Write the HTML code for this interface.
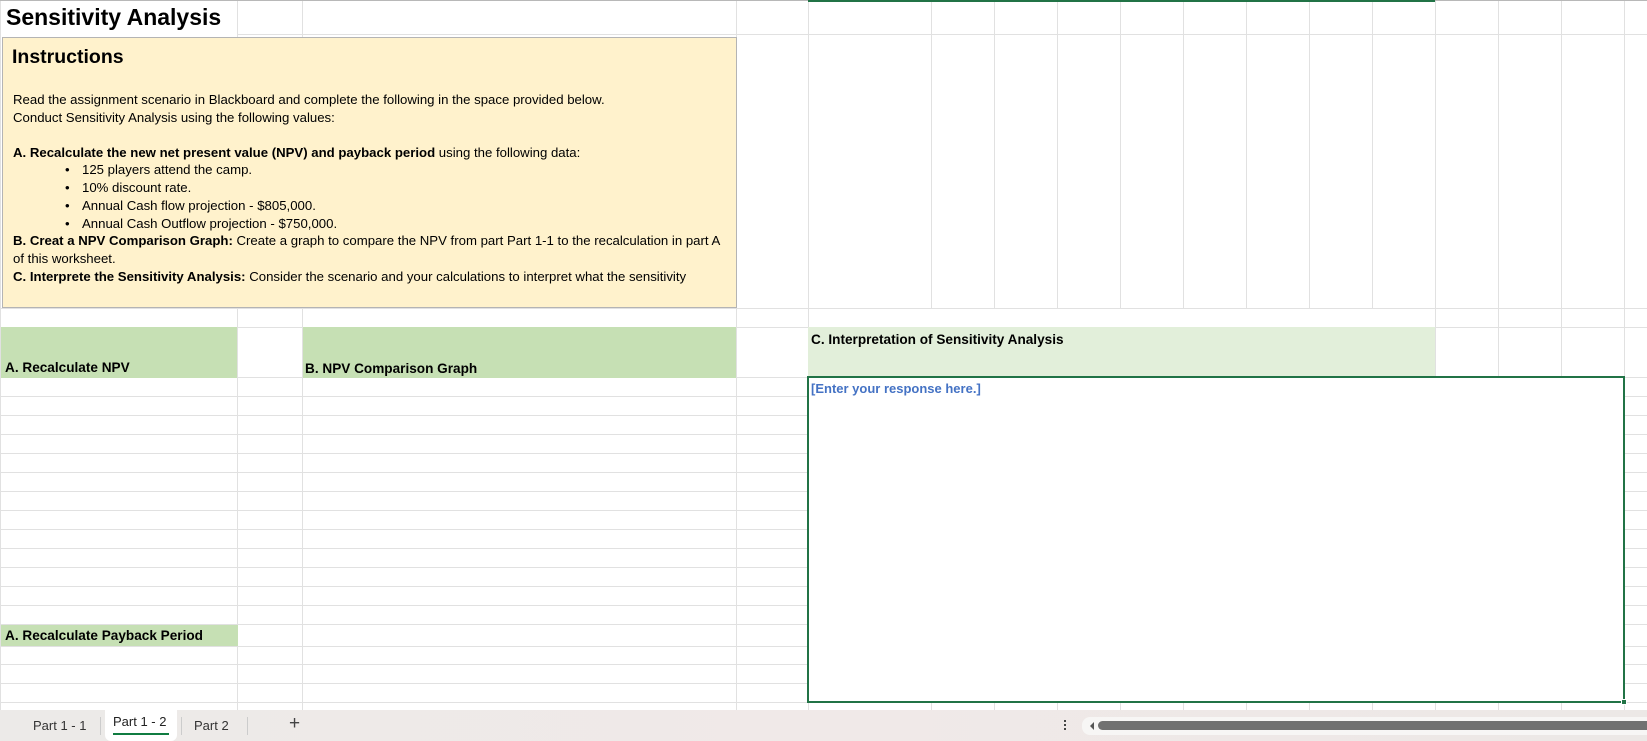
<!DOCTYPE html>
<html><head><meta charset="utf-8"><style>
*{margin:0;padding:0;box-sizing:border-box}
body{width:1647px;height:741px;overflow:hidden;background:#fff;position:relative;font-family:"Liberation Sans",Arial,sans-serif;color:#000}
.a{position:absolute}
.ins{left:2px;top:37px;width:735px;height:271px;background:#fff2cc;border:1px solid #b4b4b4;font-size:13.2px}
.ins div{position:absolute;left:10px;white-space:nowrap}
.b{font-weight:bold}
.bul{left:62px!important}
.bt{left:79px!important}
.hdr{background:#c6e0b4;font-size:13.6px;font-weight:bold}
.tab{position:absolute;top:710px;font-size:13px;color:#333}
</style></head><body>
<svg class="a" style="left:0;top:0" width="1647" height="741">
<g stroke="#e1e1e1" stroke-width="1">
<line x1="237.5" y1="0" x2="237.5" y2="710"/><line x1="302.5" y1="0" x2="302.5" y2="710"/>
<line x1="736.5" y1="0" x2="736.5" y2="710"/><line x1="808.5" y1="0" x2="808.5" y2="710"/>
<line x1="931.5" y1="0" x2="931.5" y2="308"/><line x1="994.5" y1="0" x2="994.5" y2="308"/>
<line x1="1057.5" y1="0" x2="1057.5" y2="308"/><line x1="1120.5" y1="0" x2="1120.5" y2="308"/>
<line x1="1183.5" y1="0" x2="1183.5" y2="308"/><line x1="1246.5" y1="0" x2="1246.5" y2="308"/>
<line x1="1309.5" y1="0" x2="1309.5" y2="308"/><line x1="1372.5" y1="0" x2="1372.5" y2="308"/>
<line x1="1435.5" y1="0" x2="1435.5" y2="710"/><line x1="1498.5" y1="0" x2="1498.5" y2="710"/>
<line x1="1561.5" y1="0" x2="1561.5" y2="710"/><line x1="1624.5" y1="0" x2="1624.5" y2="710"/>
<line x1="931.5" y1="702" x2="931.5" y2="710"/><line x1="994.5" y1="702" x2="994.5" y2="710"/>
<line x1="1057.5" y1="702" x2="1057.5" y2="710"/><line x1="1120.5" y1="702" x2="1120.5" y2="710"/>
<line x1="1183.5" y1="702" x2="1183.5" y2="710"/><line x1="1246.5" y1="702" x2="1246.5" y2="710"/>
<line x1="1309.5" y1="702" x2="1309.5" y2="710"/><line x1="1372.5" y1="702" x2="1372.5" y2="710"/>
<line x1="237" y1="34.5" x2="1647" y2="34.5"/><line x1="0" y1="308.5" x2="1647" y2="308.5"/>
<line x1="0" y1="327.5" x2="1647" y2="327.5"/><line x1="0" y1="377.5" x2="1647" y2="377.5"/>
<line x1="0" y1="396.5" x2="1647" y2="396.5"/><line x1="0" y1="415.5" x2="1647" y2="415.5"/>
<line x1="0" y1="434.5" x2="1647" y2="434.5"/><line x1="0" y1="453.5" x2="1647" y2="453.5"/>
<line x1="0" y1="472.5" x2="1647" y2="472.5"/><line x1="0" y1="491.5" x2="1647" y2="491.5"/>
<line x1="0" y1="510.5" x2="1647" y2="510.5"/><line x1="0" y1="529.5" x2="1647" y2="529.5"/>
<line x1="0" y1="548.5" x2="1647" y2="548.5"/><line x1="0" y1="567.5" x2="1647" y2="567.5"/>
<line x1="0" y1="586.5" x2="1647" y2="586.5"/><line x1="0" y1="605.5" x2="1647" y2="605.5"/>
<line x1="0" y1="624.5" x2="1647" y2="624.5"/><line x1="0" y1="646.5" x2="1647" y2="646.5"/>
<line x1="0" y1="664.5" x2="1647" y2="664.5"/><line x1="0" y1="683.5" x2="1647" y2="683.5"/>
<line x1="0" y1="702.5" x2="1647" y2="702.5"/>
<line x1="0.5" y1="0" x2="0.5" y2="710"/>
</g>
<line x1="0" y1="0.5" x2="808" y2="0.5" stroke="#b8b8b8"/>
<line x1="808" y1="1" x2="1435" y2="1" stroke="#217346" stroke-width="2"/>
<line x1="1435" y1="0.5" x2="1647" y2="0.5" stroke="#b8b8b8"/>
</svg>
<div class="a" style="left:1px;top:1px;width:236px;height:33px;background:#fff"></div>
<div class="a b" style="left:6px;top:4px;font-size:23px">Sensitivity Analysis</div>
<div class="a" style="left:809px;top:309px;width:626px;height:18px;background:#fff"></div>

<div class="a ins">
<div style="top:8px;font-size:19.5px;font-weight:bold;left:9px">Instructions</div>
<div style="top:54px">Read the assignment scenario in Blackboard and complete the following in the space provided below.</div>
<div style="top:72px">Conduct Sensitivity Analysis using the following values:</div>
<div style="top:107px"><b>A. Recalculate the new net present value (NPV) and payback period</b> using the following data:</div>
<div class="bul" style="top:124px">•</div><div class="bt" style="top:124px">125 players attend the camp.</div>
<div class="bul" style="top:142px">•</div><div class="bt" style="top:142px">10% discount rate.</div>
<div class="bul" style="top:160px">•</div><div class="bt" style="top:160px">Annual Cash flow projection - $805,000.</div>
<div class="bul" style="top:178px">•</div><div class="bt" style="top:178px">Annual Cash Outflow projection - $750,000.</div>
<div style="top:195px"><b>B. Creat a NPV Comparison Graph:</b> Create a graph to compare the NPV from part Part 1-1 to the recalculation in part A</div>
<div style="top:213px">of this worksheet.</div>
<div style="top:231px"><b>C. Interprete the Sensitivity Analysis:</b> Consider the scenario and your calculations to interpret what the sensitivity</div>
</div>

<div class="a hdr" style="left:1px;top:327px;width:236px;height:51px"><span class="a" style="left:4px;top:33px">A. Recalculate NPV</span></div>
<div class="a hdr" style="left:303px;top:327px;width:433px;height:51px"><span class="a" style="left:2px;top:34px">B. NPV Comparison Graph</span></div>
<div class="a hdr" style="left:808px;top:327px;width:627px;height:49px;background:#e2efda"><span class="a" style="left:3px;top:5px">C. Interpretation of Sensitivity Analysis</span></div>
<div class="a hdr" style="left:1px;top:625px;width:237px;height:21px"><span class="a" style="left:4px;top:3px">A. Recalculate Payback Period</span></div>

<div class="a" style="left:807px;top:376px;width:818px;height:327px;background:#fff;border:2px solid #217346"></div>
<div class="a" style="left:811px;top:381px;font-size:13px;font-weight:bold;color:#4472c4">[Enter your response here.]</div>
<div class="a" style="left:1621px;top:699px;width:6px;height:6px;background:#217346;border:1px solid #fff"></div>

<div class="a" style="left:0;top:710px;width:1647px;height:31px;background:linear-gradient(90deg,#eceae8,#f0e9e8 50%,#ece8e6)"></div>
<div class="a" style="left:105px;top:710px;width:72px;height:31px;background:#fff;border-radius:0 0 6px 6px"></div>
<div class="tab" style="left:33px;top:718px">Part 1 - 1</div>
<div class="tab" style="left:113px;top:714px;color:#222">Part 1 - 2</div>
<div class="a" style="left:113px;top:733px;width:56px;height:2px;background:#107c41"></div>
<div class="tab" style="left:194px;top:718px">Part 2</div>
<div class="a" style="left:100px;top:717px;width:1px;height:18px;background:#ccc"></div>
<div class="a" style="left:181px;top:717px;width:1px;height:18px;background:#ccc"></div>
<div class="a" style="left:247px;top:717px;width:1px;height:18px;background:#ccc"></div>
<div class="tab" style="left:289px;top:713px;font-size:19px;color:#444">+</div>
<div class="a" style="left:1064px;top:720px;width:2px;height:2px;background:#444;box-shadow:0 4px 0 #444,0 8px 0 #444"></div>
<div class="a" style="left:1082px;top:717px;width:565px;height:18px;background:#f7f6f5;border-radius:8px 0 0 8px"></div>
<div class="a" style="left:1090px;top:722px;width:0;height:0;border-top:4px solid transparent;border-bottom:4px solid transparent;border-right:4px solid #555"></div>
<div class="a" style="left:1098px;top:721px;width:549px;height:9px;background:#717171;border-radius:5px 0 0 5px"></div>
</body></html>
